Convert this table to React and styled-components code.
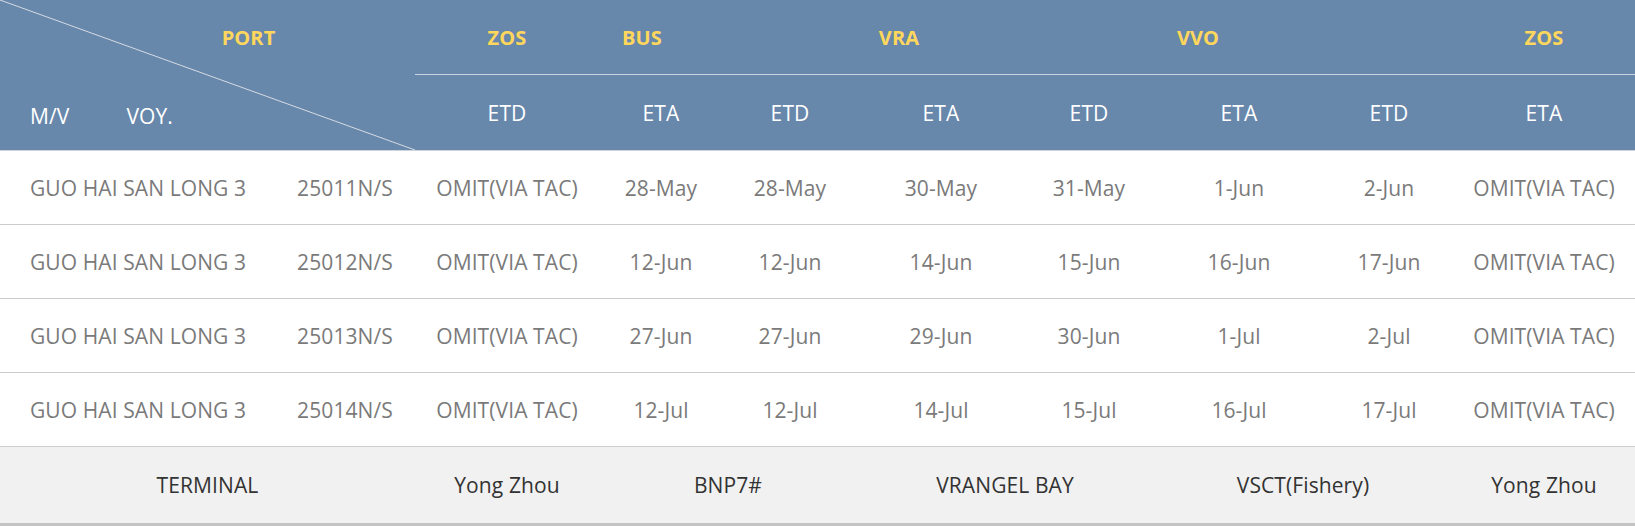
import React from 'react';
import styled, { createGlobalStyle } from 'styled-components';

const GlobalStyle = createGlobalStyle`
  body {
    margin: 0;
    background: #fff;
    font-family: "Open Sans", "Noto Sans", sans-serif;
  }
`;

const COLS = '275px 140px 184px 124px 134px 168px 128px 172px 128px 182px';
const DATE_COLS = '184px 124px 134px 168px 128px 172px 128px 182px';

const Table = styled.div`
  width: 1635px;
  font-size: 21px;
  letter-spacing: 0.1px;
`;

const Header = styled.div`
  display: flex;
  height: 150px;
  background: #6787ab;
  border-bottom: 1px solid #cfd3d8;
`;

const Corner = styled.div`
  position: relative;
  width: 415px;
  flex-shrink: 0;
  display: grid;
  grid-template-rows: 75px 75px;
`;

const Diagonal = styled.svg`
  position: absolute;
  inset: 0;
  pointer-events: none;
`;

const PortTitle = styled.div`
  display: flex;
  align-items: center;
  justify-content: center;
  padding-left: 82px;
  color: #ffd75c;
  font-weight: 700;
  font-size: 20px;
`;

const CornerLabels = styled.div`
  display: flex;
  align-items: center;
  padding: 6px 0 0 30px;
  gap: 57px;
  color: #fff;
`;

const HeaderRight = styled.div`
  flex: 1;
  display: flex;
  flex-direction: column;
`;

const PortRow = styled.div`
  height: 74px;
  display: flex;
  align-items: center;
  border-bottom: 1px solid #c9d3df;
`;

const PortLabel = styled.div`
  width: 80px;
  margin-left: ${(p) => p.$shift}px;
  text-align: center;
  color: #ffd75c;
  font-weight: 700;
  font-size: 20px;
`;

const SubRow = styled.div`
  flex: 1;
  display: grid;
  grid-template-columns: ${DATE_COLS};
  align-items: center;
  color: #fff;
`;

const Centered = styled.div`
  text-align: center;
  white-space: nowrap;
`;

const Row = styled.div`
  display: grid;
  grid-template-columns: ${COLS};
  align-items: center;
  height: 73px;
  border-bottom: 1px solid #cccccc;
  color: #7a7a7a;
  white-space: nowrap;
`;

const Ship = styled.div`
  padding-left: 30px;
`;

const Footer = styled.div`
  display: grid;
  grid-template-columns: 415px 184px 258px 296px 300px 182px;
  align-items: center;
  height: 76px;
  background: #f1f1f1;
  border-bottom: 3px solid #c4c4c4;
  color: #333;
`;

const ports = [
  { name: 'ZOS', shift: 52 },
  { name: 'BUS', shift: 55 },
  { name: 'VRA', shift: 177 },
  { name: 'VVO', shift: 219 },
  { name: 'ZOS', shift: 266 },
];

const subHeads = ['ETD', 'ETA', 'ETD', 'ETA', 'ETD', 'ETA', 'ETD', 'ETA'];

const rows = [
  ['25011N/S', ['28-May', '28-May', '30-May', '31-May', '1-Jun', '2-Jun']],
  ['25012N/S', ['12-Jun', '12-Jun', '14-Jun', '15-Jun', '16-Jun', '17-Jun']],
  ['25013N/S', ['27-Jun', '27-Jun', '29-Jun', '30-Jun', '1-Jul', '2-Jul']],
  ['25014N/S', ['12-Jul', '12-Jul', '14-Jul', '15-Jul', '16-Jul', '17-Jul']],
];

const terminals = ['TERMINAL', 'Yong Zhou', 'BNP7#', 'VRANGEL BAY', 'VSCT(Fishery)', 'Yong Zhou'];

export default function App() {
  return (
    <>
      <GlobalStyle />
      <Table>
        <Header>
          <Corner>
            <Diagonal width="415" height="150" viewBox="0 0 415 150">
              <line x1="0" y1="0" x2="415" y2="150" stroke="#d6dbe2" strokeWidth="1" />
            </Diagonal>
            <PortTitle>PORT</PortTitle>
            <CornerLabels>
              <span>M/V</span>
              <span>VOY.</span>
            </CornerLabels>
          </Corner>
          <HeaderRight>
            <PortRow>
              {ports.map((p, i) => (
                <PortLabel key={i} $shift={p.shift}>{p.name}</PortLabel>
              ))}
            </PortRow>
            <SubRow>
              {subHeads.map((h, i) => (
                <Centered key={i}>{h}</Centered>
              ))}
            </SubRow>
          </HeaderRight>
        </Header>

        {rows.map(([voy, dates]) => (
          <Row key={voy}>
            <Ship>GUO HAI SAN LONG 3</Ship>
            <Centered>{voy}</Centered>
            <Centered>OMIT(VIA TAC)</Centered>
            {dates.map((d, i) => (
              <Centered key={i}>{d}</Centered>
            ))}
            <Centered>OMIT(VIA TAC)</Centered>
          </Row>
        ))}

        <Footer>
          {terminals.map((t, i) => (
            <Centered key={i}>{t}</Centered>
          ))}
        </Footer>
      </Table>
    </>
  );
}
